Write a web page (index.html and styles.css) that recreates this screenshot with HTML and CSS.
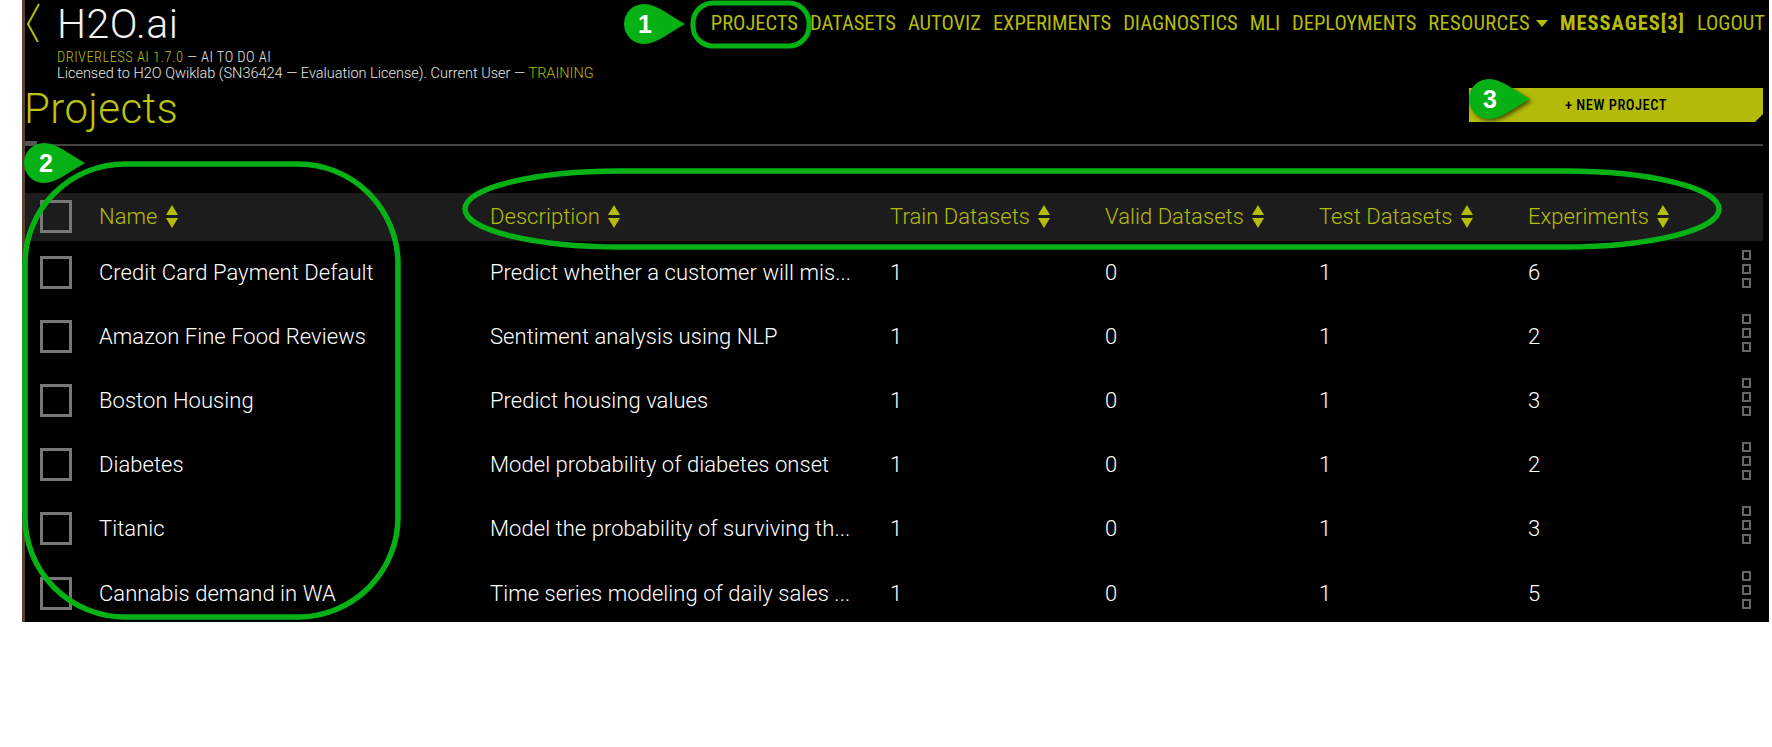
FILE: index.html
```html
<!DOCTYPE html>
<html lang="en">
<head>
<meta charset="utf-8">
<title>Projects</title>
<link rel="stylesheet" href="styles.css">
</head>
<body>
<div class="page">
  <main class="panel">
    <header class="topbar">
      <div class="brand">
        <svg class="back" viewBox="0 0 16 40" aria-hidden="true"><path d="M14 2 3 22l11 20"/></svg>
        <div class="brand-text">
          <div class="logo">H2O.ai</div>
          <div class="sub"><span class="hl">DRIVERLESS AI 1.7.0</span> — AI TO DO AI</div>
          <div class="sub lic">Licensed to H2O Qwiklab (SN36424 — Evaluation License). Current User — <span class="hl">TRAINING</span></div>
        </div>
      </div>
      <nav class="nav">
        <a>PROJECTS</a><a>DATASETS</a><a>AUTOVIZ</a><a>EXPERIMENTS</a><a>DIAGNOSTICS</a><a>MLI</a><a>DEPLOYMENTS</a>
        <a class="res">RESOURCES <i class="caret"></i></a><a class="strong">MESSAGES[3]</a><a>LOGOUT</a>
      </nav>
    </header>

    <section class="titlebar">
      <h1>Projects</h1>
      <button class="new">+ NEW PROJECT</button>
    </section>

    <section class="table">
      <div class="row head">
        <div class="cell"><span class="check"></span></div>
        <div class="cell">Name <i class="sort"></i></div>
        <div class="cell">Description <i class="sort"></i></div>
        <div class="cell">Train Datasets <i class="sort"></i></div>
        <div class="cell">Valid Datasets <i class="sort"></i></div>
        <div class="cell">Test Datasets <i class="sort"></i></div>
        <div class="cell">Experiments <i class="sort"></i></div>
      </div>
      <div class="row">
        <div class="cell"><span class="check"></span></div>
        <div class="cell">Credit Card Payment Default</div>
        <div class="cell">Predict whether a customer will mis...</div>
        <div class="cell">1</div><div class="cell">0</div><div class="cell">1</div>
        <div class="cell last">6<span class="menu"><b></b><b></b><b></b></span></div>
      </div>
      <div class="row">
        <div class="cell"><span class="check"></span></div>
        <div class="cell">Amazon Fine Food Reviews</div>
        <div class="cell">Sentiment analysis using NLP</div>
        <div class="cell">1</div><div class="cell">0</div><div class="cell">1</div>
        <div class="cell last">2<span class="menu"><b></b><b></b><b></b></span></div>
      </div>
      <div class="row">
        <div class="cell"><span class="check"></span></div>
        <div class="cell">Boston Housing</div>
        <div class="cell">Predict housing values</div>
        <div class="cell">1</div><div class="cell">0</div><div class="cell">1</div>
        <div class="cell last">3<span class="menu"><b></b><b></b><b></b></span></div>
      </div>
      <div class="row">
        <div class="cell"><span class="check"></span></div>
        <div class="cell">Diabetes</div>
        <div class="cell">Model probability of diabetes onset</div>
        <div class="cell">1</div><div class="cell">0</div><div class="cell">1</div>
        <div class="cell last">2<span class="menu"><b></b><b></b><b></b></span></div>
      </div>
      <div class="row">
        <div class="cell"><span class="check"></span></div>
        <div class="cell">Titanic</div>
        <div class="cell">Model the probability of surviving th...</div>
        <div class="cell">1</div><div class="cell">0</div><div class="cell">1</div>
        <div class="cell last">3<span class="menu"><b></b><b></b><b></b></span></div>
      </div>
      <div class="row">
        <div class="cell"><span class="check"></span></div>
        <div class="cell">Cannabis demand in WA</div>
        <div class="cell">Time series modeling of daily sales ...</div>
        <div class="cell">1</div><div class="cell">0</div><div class="cell">1</div>
        <div class="cell last">5<span class="menu"><b></b><b></b><b></b></span></div>
      </div>
    </section>
  </main>

  <svg class="notes" viewBox="0 0 1772 747" aria-hidden="true">
    <rect class="ring" x="693" y="3" width="116" height="43" rx="20"/>
    <rect class="ring wide" x="25" y="164" width="373" height="453" rx="100"/>
    <rect class="ring wide" x="465" y="171" width="1254" height="76" rx="155" ry="38"/>
    <path class="drop" d="M685 24C670 16 657 4 644 4a20 20 0 0 0 0 40C657 44 670 32 685 24Z"/>
    <text class="num" x="645" y="33">1</text>
    <path class="drop" d="M85 163C70 155 57 143 44 143a20 20 0 0 0 0 40C57 183 70 171 85 163Z"/>
    <text class="num" x="46" y="172">2</text>
    <path class="drop shadow" d="M1530 99C1515 91 1502 79 1489 79a20 20 0 0 0 0 40C1502 119 1515 107 1530 99Z"/>
    <text class="num" x="1490" y="108">3</text>
  </svg>
</div>
</body>
</html>
```
FILE: styles.css
```css
* { box-sizing: border-box; }
html, body { margin: 0; background: #fff; }
body { font-family: Roboto, "Liberation Sans", sans-serif; font-weight: 300; color: #fff; }

.page { position: relative; width: 1772px; height: 747px; overflow: hidden; }

.panel {
  width: 1747px;
  height: 622px;
  margin-left: 22px;
  background: #000;
  border-left: 3px solid #5c4030;
  padding-right: 6px;
  overflow: hidden;
}

.topbar { display: flex; justify-content: space-between; height: 80px; }
.brand { display: flex; align-items: flex-start; }
.back { width: 16px; height: 40px; margin: 2px 16px 0 0; fill: none; stroke: #b5bd0a; stroke-width: 2; }
.logo { font-size: 41px; line-height: 48px; letter-spacing: 0.5px; color: #f2f2f2; }
.sub {
  font-size: 14.5px;
  line-height: 15.5px;
  font-stretch: 85%;
  font-weight: 300;
  color: #e6e6e6;
  margin-top: 2px;
  letter-spacing: 0.45px;
  white-space: nowrap;
}
.sub.lic { margin-top: 0; font-stretch: 88%; letter-spacing: 0; }
.hl { color: #b5bd0a; }

.nav { display: flex; gap: 12px; align-items: center; height: 46px; margin-right: -2px; color: #b5bd0a; font-size: 20.5px; font-stretch: 80%; font-weight: 400; white-space: nowrap; }
.nav .strong { font-weight: 700; letter-spacing: 1px; }
.nav .res { display: flex; align-items: center; gap: 6px; letter-spacing: 0.3px; }
.caret { width: 0; height: 0; border: 6px solid transparent; border-top: 7px solid #b5bd0a; border-bottom: 0; }

.titlebar {
  position: relative;
  display: flex;
  justify-content: space-between;
  align-items: flex-start;
  height: 66px;
  border-bottom: 2px solid #444;
}
.titlebar::after { content: ""; position: absolute; left: 0; bottom: -2px; width: 12px; height: 5px; background: #555; }
h1 { margin: 3px 0 0 -1px; font-size: 42px; line-height: 52px; font-weight: 300; letter-spacing: 0.4px; color: #bcc40e; }
.new {
  width: 294px;
  height: 34px;
  margin-top: 8px;
  border: 0;
  background: #b3bb08;
  clip-path: polygon(0 0, 100% 0, 100% calc(100% - 8px), calc(100% - 8px) 100%, 0 100%);
  font-family: inherit;
  font-size: 14.5px;
  font-weight: 500;
  font-stretch: 85%;
  color: #000;
  letter-spacing: 0.5px;
}

.table { margin-top: 47px; }
.row {
  display: grid;
  grid-template-columns: 74px 391px 400px 215px 214px 209px 1fr;
  align-items: center;
  height: 64.2px;
  padding-bottom: 2px;
  font-size: 22px;
  letter-spacing: 0.05px;
  color: #fff;
  white-space: nowrap;
}
.row.head { height: 48px; background: #1c1c1c; color: #b5bd0a; }
.cell { display: flex; align-items: center; gap: 8px; }
.cell:first-child { padding-left: 15px; }
.last { justify-content: space-between; padding-right: 12px; }

.check { display: block; width: 32px; height: 33px; border: 3px solid #777; }

.sort { position: relative; display: block; width: 12px; height: 23px; }
.sort::before, .sort::after { content: ""; position: absolute; left: 0; border: 6px solid transparent; }
.sort::before { top: 0; border-top: 0; border-bottom: 10px solid #b5bd0a; }
.sort::after { bottom: 0; border-bottom: 0; border-top: 10px solid #b5bd0a; }

.menu { display: flex; flex-direction: column; gap: 4px; margin-bottom: 7px; }
.menu b { display: block; width: 9px; height: 10px; border: 2px solid #666; }

.notes { position: absolute; left: 0; top: 0; width: 1772px; height: 747px; pointer-events: none; }
.ring { fill: none; stroke: #05b115; stroke-width: 5; }
.ring.wide { stroke-width: 5.5; }
.drop { fill: #05b115; }
.shadow { filter: drop-shadow(2px 2px 2px rgba(0, 0, 0, 0.6)); }
.num { font-family: "Liberation Sans", sans-serif; font-size: 25px; font-weight: 700; fill: #fff; text-anchor: middle; }
```
